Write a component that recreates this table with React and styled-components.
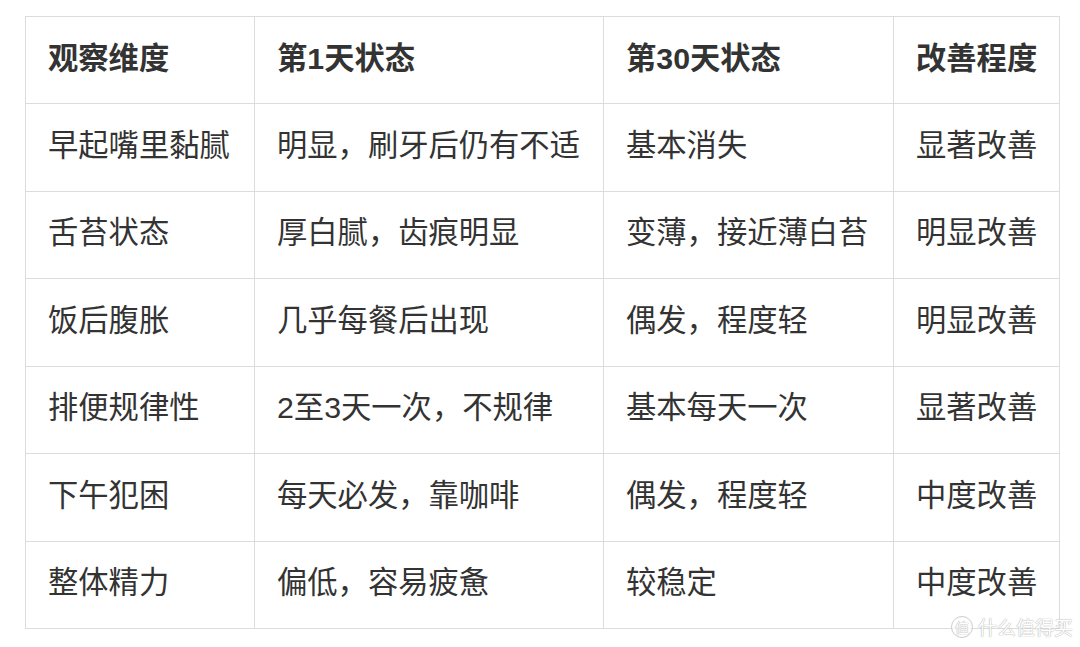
import React from "react";
import styled, { createGlobalStyle } from "styled-components";

const Global = createGlobalStyle`
  html, body { margin: 0; padding: 0; background: #fff; }
  body { font-family: "Liberation Sans", "Noto Sans CJK SC", sans-serif; }
`;

const Page = styled.div`
  position: relative;
  width: 1080px;
  height: 647px;
  padding: 16px 0 0 25px;
  box-sizing: border-box;
  background: #fff;
`;

const Grid = styled.div`
  display: grid;
  grid-template-columns: 229px 349px 290px 166px;
  grid-template-rows: repeat(7, 87.43px);
  width: 1035px;
  border-top: 1px solid #dcdcdc;
  border-left: 1px solid #dcdcdc;
  box-sizing: border-box;
`;

const Cell = styled.div`
  display: flex;
  align-items: center;
  padding: 0 0 3px 22px;
  box-sizing: border-box;
  border-right: 1px solid #dcdcdc;
  border-bottom: 1px solid #dcdcdc;
  font-size: 30.3px;
  line-height: 1;
  color: #333;
  font-weight: ${(p) => (p.$head ? 700 : 400)};
  white-space: nowrap;
  overflow: hidden;
`;

const Mark = styled.div`
  position: absolute;
  left: 951px;
  top: 613px;
  display: flex;
  align-items: center;
  gap: 5px;
  color: #fff;
  font-size: 19px;
  font-family: "Noto Sans CJK SC", sans-serif;
  text-shadow: 0 0 1px #9a9a9a, 0 0 1px #bbb;
  opacity: 0.9;
`;

const Logo = styled.span`
  width: 20px;
  height: 20px;
  border-radius: 50%;
  border: 1.5px solid #c8c8c8;
  background: rgba(255, 255, 255, 0.8);
  display: flex;
  align-items: center;
  justify-content: center;
  font-size: 14px;
  color: #fff;
`;

const rows = [
  ["观察维度", "第1天状态", "第30天状态", "改善程度"],
  ["早起嘴里黏腻", "明显，刷牙后仍有不适", "基本消失", "显著改善"],
  ["舌苔状态", "厚白腻，齿痕明显", "变薄，接近薄白苔", "明显改善"],
  ["饭后腹胀", "几乎每餐后出现", "偶发，程度轻", "明显改善"],
  ["排便规律性", "2至3天一次，不规律", "基本每天一次", "显著改善"],
  ["下午犯困", "每天必发，靠咖啡", "偶发，程度轻", "中度改善"],
  ["整体精力", "偏低，容易疲惫", "较稳定", "中度改善"],
];

export default function App() {
  return (
    <>
      <Global />
      <Page>
        <Grid>
          {rows.map((r, i) =>
            r.map((c, j) => (
              <Cell key={`${i}-${j}`} $head={i === 0}>
                {c}
              </Cell>
            ))
          )}
        </Grid>
        <Mark>
          <Logo>值</Logo>
          <span>什么值得买</span>
        </Mark>
      </Page>
    </>
  );
}
